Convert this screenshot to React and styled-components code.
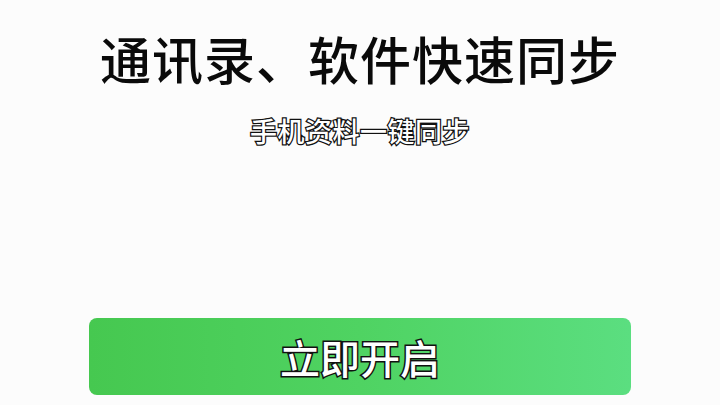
import styled, { createGlobalStyle } from 'styled-components'

const GlobalStyle = createGlobalStyle`
    html, body {
        margin: 0;
        padding: 0;
        background: #fcfcfc;
    }
    body {
        font-family: "Noto Sans CJK SC", "Noto Sans", sans-serif;
    }
`

const Page = styled.div`
    width: 720px;
    height: 405px;
    display: flex;
    flex-direction: column;
    align-items: center;
    overflow: hidden;
    background: #fcfcfc;
`

const Title = styled.h1`
    margin: 28px 0 0;
    font-size: 51px;
    line-height: 60px;
    font-weight: 500;
    color: #0a0a0a;
    letter-spacing: 1px;
`

const Subtitle = styled.p`
    margin: 26px 0 0;
    font-size: 27px;
    line-height: 34px;
    font-weight: 500;
    color: #fff;
    -webkit-text-stroke: 2.5px #111;
    paint-order: stroke fill;
    letter-spacing: 0.5px;
`

const StartButton = styled.button`
    margin-top: auto;
    margin-bottom: 10px;
    width: 542px;
    height: 77px;
    border: none;
    border-radius: 8px;
    background: linear-gradient(90deg, #46c850 0%, #4fd362 50%, #5bde80 100%);
    display: flex;
    align-items: center;
    justify-content: center;
    font-family: inherit;
    font-size: 40px;
    font-weight: 500;
    color: #fff;
    -webkit-text-stroke: 3px #111;
    paint-order: stroke fill;
    cursor: pointer;
`

export default function App() {
    return (
        <>
            <GlobalStyle />
            <Page>
                <Title>通讯录、软件快速同步</Title>
                <Subtitle>手机资料一键同步</Subtitle>
                <StartButton>立即开启</StartButton>
            </Page>
        </>
    )
}
